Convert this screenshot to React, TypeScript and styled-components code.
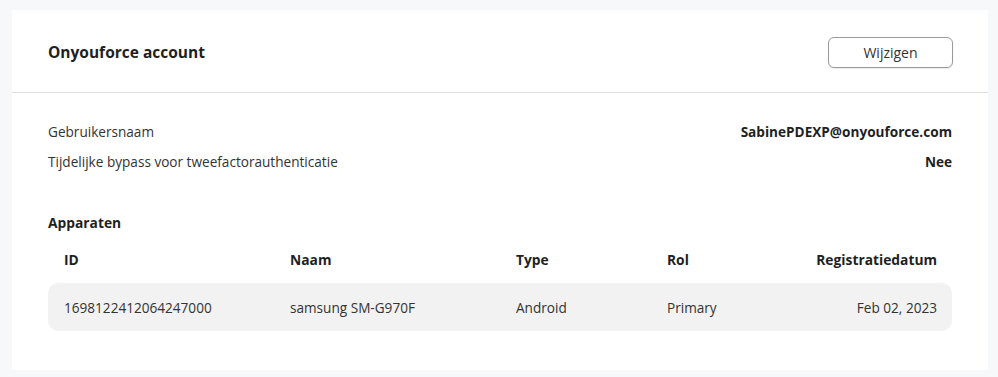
import styled, { createGlobalStyle } from 'styled-components'

type Device = {
  id: string
  name: string
  type: string
  role: string
  registered: string
}

const devices: Device[] = [
  {
    id: '1698122412064247000',
    name: 'samsung SM-G970F',
    type: 'Android',
    role: 'Primary',
    registered: 'Feb 02, 2023',
  },
]

const GlobalStyle = createGlobalStyle`
  *,
  *::before,
  *::after {
    box-sizing: border-box;
  }

  body {
    margin: 0;
    font-family: 'Open Sans', 'Noto Sans', Arial, sans-serif;
    background: #f7f8fa;
    color: #333333;
  }

  button {
    font: inherit;
    cursor: pointer;
  }
`

function App() {
  return (
    <Page>
      <GlobalStyle />
      <Card>
        <CardHeader>
          <Title>Onyouforce account</Title>
          <EditButton type="button">Wijzigen</EditButton>
        </CardHeader>

        <CardBody>
          <InfoList>
            <InfoRow>
              <InfoLabel>Gebruikersnaam</InfoLabel>
              <InfoValue>SabinePDEXP@onyouforce.com</InfoValue>
            </InfoRow>
            <InfoRow>
              <InfoLabel>Tijdelijke bypass voor tweefactorauthenticatie</InfoLabel>
              <InfoValue>Nee</InfoValue>
            </InfoRow>
          </InfoList>

          <SectionTitle>Apparaten</SectionTitle>

          <Table>
            <HeaderRow>
              <HeadCell>ID</HeadCell>
              <HeadCell>Naam</HeadCell>
              <HeadCell>Type</HeadCell>
              <HeadCell>Rol</HeadCell>
              <HeadCell align="right">Registratiedatum</HeadCell>
            </HeaderRow>
            {devices.map((device) => (
              <DataRow key={device.id}>
                <Cell>{device.id}</Cell>
                <Cell>{device.name}</Cell>
                <Cell>{device.type}</Cell>
                <Cell>{device.role}</Cell>
                <Cell align="right">{device.registered}</Cell>
              </DataRow>
            ))}
          </Table>
        </CardBody>
      </Card>
    </Page>
  )
}

export default App

const Page = styled.div`
  padding: 10px 10px 7px 12px;
`

const Card = styled.section`
  width: 976px;
  background: #ffffff;
`

const CardHeader = styled.header`
  height: 83px;
  display: flex;
  align-items: center;
  justify-content: space-between;
  padding: 2px 35px 0 36px;
  border-bottom: 1px solid #e0e0e0;
`

const Title = styled.h2`
  margin: 0;
  font-size: 15.5px;
  font-weight: 700;
  color: #1f1f1f;
`

const EditButton = styled.button`
  width: 125px;
  height: 31px;
  padding: 0;
  border: 1px solid #9a9a9a;
  border-radius: 6px;
  background: #ffffff;
  color: #333333;
  font-size: 14px;
  box-shadow: 0 1px 1px rgba(0, 0, 0, 0.08);
`

const CardBody = styled.div`
  padding: 29px 36px 39px;
`

const InfoList = styled.div`
  display: grid;
  gap: 10px;
`

const InfoRow = styled.div`
  display: flex;
  justify-content: space-between;
  align-items: center;
  font-size: 13.6px;
  line-height: 20px;
`

const InfoLabel = styled.span`
  color: #333333;
`

const InfoValue = styled.span`
  font-weight: 700;
  color: #1f1f1f;
`

const SectionTitle = styled.h3`
  margin: 41px 0 0;
  font-size: 13.8px;
  line-height: 20px;
  font-weight: 700;
  color: #1f1f1f;
`

const Table = styled.div`
  margin-top: 2px;
`

const columns = '226px 226px 151px 1fr auto'

const HeaderRow = styled.div`
  display: grid;
  grid-template-columns: ${columns};
  align-items: center;
  height: 48px;
  padding: 0 15px 0 16px;
`

const HeadCell = styled.div<{ align?: 'left' | 'right' }>`
  font-size: 13.8px;
  font-weight: 700;
  color: #1f1f1f;
  text-align: ${({ align }) => align ?? 'left'};
`

const DataRow = styled.div`
  display: grid;
  grid-template-columns: ${columns};
  align-items: center;
  height: 48px;
  padding: 0 15px 0 16px;
  background: #f2f2f2;
  border-radius: 10px;
`

const Cell = styled.div<{ align?: 'left' | 'right' }>`
  font-size: 13.6px;
  color: #333333;
  text-align: ${({ align }) => align ?? 'left'};
`
